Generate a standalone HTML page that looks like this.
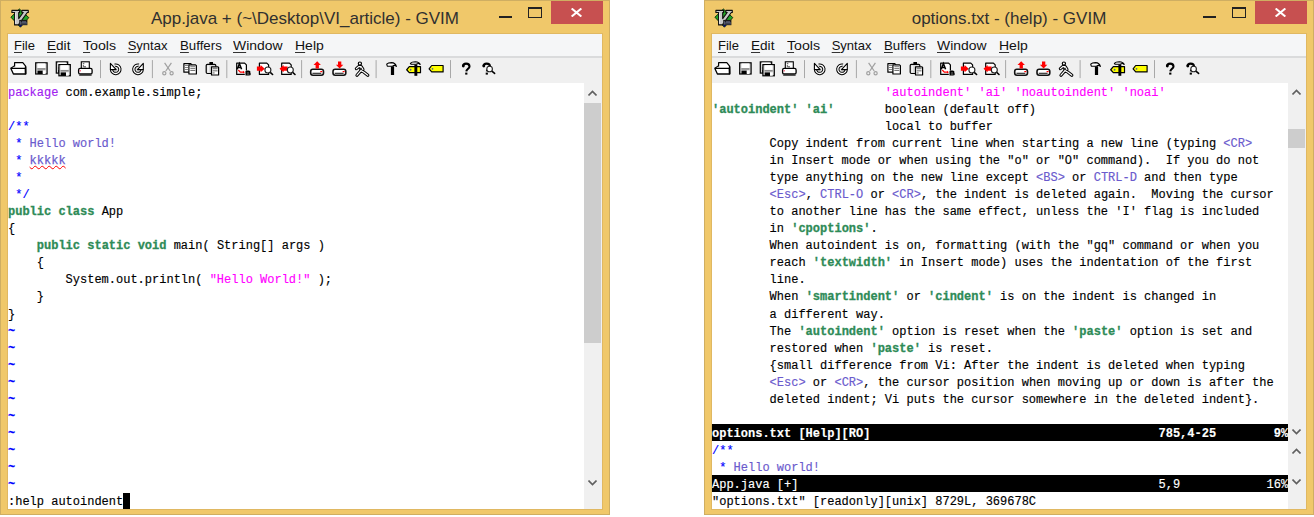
<!DOCTYPE html>
<html><head><meta charset="utf-8"><title>GVIM</title><style>
*{margin:0;padding:0;box-sizing:border-box}
body{width:1314px;height:517px;background:#fff;position:relative;overflow:hidden;font-family:"Liberation Sans",sans-serif}
.win{position:absolute;top:0;width:610px;height:515px;background:#F0C86A;border:1px solid #CFAE62}
.title{position:absolute;left:0;top:1px;width:608px;height:33px;text-align:center;font-size:17px;line-height:33px;color:#303030;white-space:pre}
.vicon{position:absolute;left:9px;top:7px}
.tmin{position:absolute;left:497.6px;top:15px;width:13px;height:2px;background:#222}
.tmax{position:absolute;left:527.2px;top:6px;width:14px;height:11px;border:1px solid #222;border-top-width:2.5px}
.tclose{position:absolute;left:550px;top:0px;width:52px;height:23px;background:#C75050}
.tclose svg{position:absolute;left:19.6px;top:6.6px}
.client{position:absolute;left:7px;top:33px;width:594px;height:475px;background:#fff;overflow:hidden;box-shadow:0 0 0 1px #E0B862}
.menu{position:absolute;left:0;top:0;width:594px;height:22px;background:#F5F6F7;font-size:13px;color:#111}
.mi{position:absolute;top:4px;white-space:pre;transform-origin:0 0}
.mi u{text-decoration:underline;text-underline-offset:1.5px;text-decoration-color:#333}
.msep{position:absolute;left:0;top:22px;width:594px;height:2px;background:#DADBDC}
.tb{position:absolute;left:0;top:24px;width:594px;height:25px;background:#F0F0F0}
.ed{position:absolute;left:0;top:0;width:576px;height:475px}
.r{position:absolute;left:0;height:17px;width:576px;font-family:"Liberation Mono",monospace;font-size:12px;line-height:20.8px;white-space:pre;color:#000;-webkit-text-stroke:0.15px currentColor}
.cm{color:#0000FF}
.sp{color:#6A5ACD}
.ty{color:#2E8B57;font-weight:bold;-webkit-text-stroke:0.3px #2E8B57}
.pp{color:#A020F0}
.co{color:#FF00FF}
.nt{color:#0000FF;font-weight:bold}
.st{background:#000;color:#fff;font-weight:bold}
.snc{background:#000;color:#fff}
.bad{text-decoration:underline wavy red;text-decoration-thickness:1px;text-underline-offset:0.5px;-webkit-text-stroke:0.25px #6A5ACD}
.cur{position:absolute;background:#000}
.sb{position:absolute;left:576px;width:18px;background:#F0F0F0}
.thumb{position:absolute;left:0;width:17px;background:#CDCDCD}
.arr{position:absolute;left:4px}
</style></head>
<body><div class="win" style="left:0px"><div class="title">App.java + (~\Desktop\VI_article) - GVIM</div><svg class="vicon" width="20" height="20" viewBox="9 7 20 20">
<polygon points="18.4,8.0 27.8,16.6 19.4,26.2 9.9,16.2" fill="#23a326" stroke="#082808" stroke-width="0.9"/>
<path d="M17.4 23.4 L19.4 26.2 L22 23.4 Z" fill="#0c0c70"/>
<path d="M10.9 9.4 H18.6 V11.5 H17.7 V17.6 L22.2 11.5 H20.9 V9.4 H27.3 V11.5 H26.3 L17.4 23.9 H13.6 V11.5 H10.9 Z" fill="#c9c9c9" stroke="#0e0e0e" stroke-width="1.1" stroke-linejoin="round"/>
<path d="M14.6 11.8 V22.8" stroke="#eee" stroke-width="0.9"/>
<rect x="18.2" y="18.9" width="8.2" height="5.3" fill="#1a1a1a"/>
<path d="M19.3 20.2 V23.6 M21.0 20.9 V23.6 M21.0 20.9 H25.0 V23.6 M23.0 20.9 V23.6" stroke="#8a90b8" stroke-width="0.7" fill="none"/>
</svg><div class="tmin"></div><div class="tmax"></div><div class="tclose"><svg width="11" height="9" viewBox="0 0 11 9"><path d="M0.6 0.5L10.4 8.5M10.4 0.5L0.6 8.5" stroke="#fff" stroke-width="2.1"/></svg></div><div class="client"><div class="menu"><span class="mi" style="left:6.0px;transform:scaleX(1.0)"><u>F</u>ile</span><span class="mi" style="left:38.9px;transform:scaleX(1.045)"><u>E</u>dit</span><span class="mi" style="left:75.4px;transform:scaleX(1.09)"><u>T</u>ools</span><span class="mi" style="left:119.7px;transform:scaleX(1.0)"><u>S</u>yntax</span><span class="mi" style="left:171.6px;transform:scaleX(1.02)"><u>B</u>uffers</span><span class="mi" style="left:224.7px;transform:scaleX(1.07)"><u>W</u>indow</span><span class="mi" style="left:287.3px;transform:scaleX(1.077)"><u>H</u>elp</span></div><div class="msep"></div><div class="tb"><svg width="594" height="25" viewBox="8 58 594 25" style="position:absolute;left:0;top:0"><rect x="100.0" y="60.1" width="1" height="18" fill="#a8a8a8"/><rect x="151.9" y="60.1" width="1" height="18" fill="#a8a8a8"/><rect x="226.3" y="60.1" width="1" height="18" fill="#a8a8a8"/><rect x="301.1" y="60.1" width="1" height="18" fill="#a8a8a8"/><rect x="375.6" y="60.1" width="1" height="18" fill="#a8a8a8"/><rect x="450.0" y="60.1" width="1" height="18" fill="#a8a8a8"/><path d="M14.6 66.5 V62.7 H22.8 L25.6 66.2 V73.8" fill="#fff" stroke="#000" stroke-width="1.2" stroke-linejoin="round"/><path d="M10.9 68.3 L14.6 65.6" stroke="#000" stroke-width="1.1"/><path d="M10.9 68.4 H25.4 L25.6 74 H13.4 Z" fill="#fff" stroke="#000" stroke-width="1.3" stroke-linejoin="round"/><line x1="25.6" y1="66.5" x2="25.6" y2="74.3" stroke="#000" stroke-width="1.6"/><rect x="35.7" y="62.800000000000004" width="11.4" height="11.200000000000001" fill="#d8d8d8" stroke="#000" stroke-width="1.2"/><rect x="37.5" y="63.400000000000006" width="7.8" height="4.712000000000001" fill="#fff"/><rect x="37.300000000000004" y="68.152" width="8.2" height="1.6" fill="#8a8a8a"/><rect x="37.5" y="70.632" width="5.292" height="3.3480000000000003" fill="#000"/><rect x="42.792" y="70.632" width="2.772" height="3.3480000000000003" fill="#fff"/><rect x="56.300000000000004" y="61.9" width="11.4" height="11.200000000000001" fill="#d8d8d8" stroke="#000" stroke-width="1.2"/><rect x="58.1" y="62.5" width="7.8" height="4.712000000000001" fill="#fff"/><rect x="57.900000000000006" y="67.252" width="8.2" height="1.6" fill="#8a8a8a"/><rect x="58.1" y="69.732" width="5.292" height="3.3480000000000003" fill="#000"/><rect x="63.392" y="69.732" width="2.772" height="3.3480000000000003" fill="#fff"/><rect x="58.9" y="64.6" width="11.4" height="11.200000000000001" fill="#d8d8d8" stroke="#000" stroke-width="1.2"/><rect x="60.699999999999996" y="65.2" width="7.8" height="4.712000000000001" fill="#fff"/><rect x="60.5" y="69.952" width="8.2" height="1.6" fill="#8a8a8a"/><rect x="60.699999999999996" y="72.432" width="5.292" height="3.3480000000000003" fill="#000"/><rect x="65.99199999999999" y="72.432" width="2.772" height="3.3480000000000003" fill="#fff"/><rect x="81.3" y="61.8" width="8" height="7" fill="#fff" stroke="#000" stroke-width="1.1"/><rect x="82.8" y="63.3" width="1.5" height="0.9" fill="#333"/><rect x="82.8" y="65.2" width="1" height="1.5" fill="#333"/><rect x="83.5" y="66.4" width="2.5" height="0.9" fill="#333"/><rect x="78.6" y="68.4" width="13.5" height="5.6" rx="1.6" fill="#fff" stroke="#000" stroke-width="1.3"/><rect x="79.5" y="70.2" width="1.4" height="1.2" fill="#f04060"/><line x1="79.2" y1="75.2" x2="91.6" y2="75.2" stroke="#222" stroke-width="1.1"/><circle cx="115.7" cy="69.3" r="2.4" fill="#e0e0e0"/><path d="M111.5 69.3 A4.2 4.2 0 1 0 114.8 65.19999999999999" fill="none" stroke="#000" stroke-width="3.3"/><path d="M111.5 69.3 A4.2 4.2 0 1 0 114.8 65.19999999999999" fill="none" stroke="#fff" stroke-width="1.3"/><path d="M110.4 63.4 V69.6 H116.2 Z" fill="#fff" stroke="#000" stroke-width="1.1" stroke-linejoin="round"/><circle cx="138.0" cy="69.3" r="2.4" fill="#e0e0e0"/><path d="M142.2 69.3 A4.2 4.2 0 1 1 138.9 65.19999999999999" fill="none" stroke="#000" stroke-width="3.3"/><path d="M142.2 69.3 A4.2 4.2 0 1 1 138.9 65.19999999999999" fill="none" stroke="#fff" stroke-width="1.3"/><path d="M143.3 63.4 V69.6 H137.5 Z" fill="#fff" stroke="#000" stroke-width="1.1" stroke-linejoin="round"/><g stroke="#a0a0a0" stroke-width="1.2" fill="none"><path d="M164.6 62.8 L170.2 71"/><path d="M171.4 62.8 L165.8 71"/><circle cx="164.3" cy="73.2" r="1.6"/><circle cx="171.6" cy="73.2" r="1.6"/></g><path d="M183.9 63.7 H190.8 L191.70000000000002 64.6 V72.2 H183.9 Z" fill="#fff" stroke="#000" stroke-width="1.2" stroke-linejoin="round"/><g fill="#777"><rect x="184.8" y="65" width="3.2" height="0.9"/><rect x="184.8" y="67" width="3.2" height="0.9"/><rect x="184.8" y="69" width="3.2" height="0.9"/></g><path d="M188.9 64.8 H195.5 L196.4 65.7 V74.0 H188.9 Z" fill="#fff" stroke="#000" stroke-width="1.2" stroke-linejoin="round"/><g fill="#666"><rect x="190.3" y="66.3" width="5" height="0.9"/><rect x="190.3" y="68.2" width="5" height="0.9"/><rect x="190.3" y="70.1" width="5" height="0.9"/></g><rect x="206.2" y="64.3" width="9.6" height="9.2" rx="1.2" fill="#ddd" stroke="#000" stroke-width="1.2"/><rect x="209.4" y="62.0" width="3.6" height="2.6" fill="#000"/><rect x="207.6" y="65.5" width="1.0" height="7" fill="#fff"/><path d="M211.5 66.8 H218.0 L218.6 67.4 V75.0 H211.5 Z" fill="#fff" stroke="#000" stroke-width="1.2" stroke-linejoin="round"/><g fill="#555"><rect x="212.6" y="68.3" width="5" height="0.9"/><rect x="212.6" y="70.4" width="5" height="0.9"/><rect x="212.6" y="72.5" width="2" height="0.9"/></g><path d="M236.7 63.1 H244.6 L246.4 64.9 V74.4 H236.7 Z" fill="#fff" stroke="#000" stroke-width="1.2" stroke-linejoin="round"/><path d="M237.2 69.2 L239.4 63.6 L241.6 69.2 M238.1 67.5 H240.7" fill="none" stroke="#000" stroke-width="1.5"/><path d="M238.3 70 L240.3 72.2 H243.6" stroke="#f00" stroke-width="1.2" fill="none"/><path d="M243 70.8 L245 72.2 L243 73.6Z" fill="#f00"/><rect x="244.8" y="70.5" width="5.6" height="5" fill="#f0f0f0"/><path d="M246.2 71.2 H248.6 C250.2 71.2 250.2 73.0 248.6 73.0 H246.2 M246.2 73.0 H248.8 C250.6 73.0 250.6 74.9 248.8 74.9 H246.2 Z M246.2 71 V75" fill="none" stroke="#000" stroke-width="1.4"/><path d="M259.40000000000003 63.1 H266.8 L268.59999999999997 64.9 V74.4 H259.40000000000003 Z" fill="#fff" stroke="#000" stroke-width="1.2" stroke-linejoin="round"/><path d="M256.9 66.6 H260.6 V65.1 L264.8 68.7 L260.6 72.3 V70.8 H256.9 Z" fill="#f00"/><line x1="269.7" y1="71.8" x2="272.6" y2="74.5" stroke="#000" stroke-width="1.6" stroke-linecap="round"/><circle cx="267.9" cy="70.0" r="3.0" fill="#fff" stroke="#222" stroke-width="1.1"/><path d="M281.70000000000005 63.1 H289.40000000000003 L291.2 64.9 V74.4 H281.70000000000005 Z" fill="#fff" stroke="#000" stroke-width="1.2" stroke-linejoin="round"/><path d="M287.6 66.6 H283.6 V65.1 L279.5 68.7 L283.6 72.3 V70.8 H287.6 Z" fill="#f00"/><line x1="292.1" y1="71.8" x2="295.0" y2="74.5" stroke="#000" stroke-width="1.6" stroke-linecap="round"/><circle cx="290.3" cy="70.0" r="3.0" fill="#fff" stroke="#222" stroke-width="1.1"/><rect x="310.7" y="69.2" width="12.800000000000034" height="6.099999999999989" rx="2.2" fill="#fff" stroke="#111" stroke-width="1.6"/><line x1="312.4" y1="73.3" x2="321.3" y2="73.3" stroke="#222" stroke-width="1.1"/><rect x="320.3" y="71.0" width="2" height="1.2" fill="#f00"/><path d="M317.2 61.2 L320.9 64.9 H318.9 V68.6 H315.6 V64.9 H313.5 Z" fill="#f00"/><rect x="333.0" y="69.2" width="12.800000000000034" height="6.099999999999989" rx="2.2" fill="#fff" stroke="#111" stroke-width="1.6"/><line x1="334.7" y1="73.3" x2="343.6" y2="73.3" stroke="#222" stroke-width="1.1"/><rect x="342.6" y="71.0" width="2" height="1.2" fill="#f00"/><path d="M339.6 68.4 L343.3 64.7 H341.3 V61.4 H338 V64.7 H335.9 Z" fill="#f00"/><path d="M356.4 68.6 L358.6 66.7 H361.2 L362.9 69.4 M360.6 66.8 L361.0 70.6 L357.0 75.2 M361.0 70.6 L364.0 72.2 L367.8 75.2" fill="none" stroke="#000" stroke-width="3.2" stroke-linejoin="round" stroke-linecap="round"/><path d="M356.4 68.6 L358.6 66.7 H361.2 L362.9 69.4 M360.6 66.8 L361.0 70.6 L357.0 75.2 M361.0 70.6 L364.0 72.2 L367.8 75.2" fill="none" stroke="#fff" stroke-width="1.2" stroke-linejoin="round" stroke-linecap="round"/><circle cx="359.9" cy="63.6" r="1.6" fill="#fff" stroke="#000" stroke-width="1.2"/><rect x="360.2" y="67.8" width="1.4" height="2.2" fill="#000"/><rect x="390.9" y="66.3" width="3.2000000000000455" height="8.700000000000003" fill="#000"/><path d="M386.70000000000005 64.2 Q388.1 62.6 391.55 62.6 Q395.5 62.8 396.4 66.39999999999999 Q394.5 64.6 392.55 66.2 H387.3 Z" fill="#fff" stroke="#000" stroke-width="1.1" stroke-linejoin="round"/><path d="M406.70000000000005 69.75 L409.3 66.6 H420.5 V72.7 H409.3 Z" fill="#ffff00" stroke="#000" stroke-width="1.2" stroke-linejoin="round"/><circle cx="410.6" cy="69.75" r="0.9" fill="#5060a0"/><rect x="414.4" y="64.4" width="2.900000000000034" height="11.399999999999991" fill="#000"/><path d="M410.40000000000003 63.400000000000006 Q411.8 61.800000000000004 415.3 61.800000000000004 Q419.3 62.0 420.2 64.5 Q418.3 62.7 416.3 64.30000000000001 H411.0 Z" fill="#fff" stroke="#000" stroke-width="1.1" stroke-linejoin="round"/><path d="M429.1 68.80000000000001 L431.7 65.5 H443.09999999999997 V71.9 H431.7 Z" fill="#ffff00" stroke="#000" stroke-width="1.2" stroke-linejoin="round"/><circle cx="432.5" cy="68.80000000000001" r="0.9" fill="#5060a0"/><path d="M463.09999999999997 66.19999999999999 C463.09999999999997 63.99999999999999 464.7 63.599999999999994 466.09999999999997 63.599999999999994 C468.3 63.599999999999994 469.5 64.8 469.5 66.39999999999999 C469.5 68.6 466.5 68.8 466.3 71.39999999999999" fill="none" stroke="#000" stroke-width="2.1"/><circle cx="463.3" cy="66.0" r="1.4" fill="#000"/><rect x="465.2" y="72.6" width="2.2" height="2.0" fill="#000"/><path d="M483.59999999999997 66.19999999999999 C483.59999999999997 63.99999999999999 485.2 63.599999999999994 486.59999999999997 63.599999999999994 C488.8 63.599999999999994 490.0 64.8 490.0 66.39999999999999 C490.0 68.6 487.0 68.8 486.8 71.39999999999999" fill="none" stroke="#000" stroke-width="2.1"/><circle cx="483.8" cy="66.0" r="1.4" fill="#000"/><rect x="485.7" y="72.6" width="2.2" height="2.0" fill="#000"/><line x1="491.28000000000003" y1="70.68" x2="494.6" y2="73.4" stroke="#000" stroke-width="1.6" stroke-linecap="round"/><circle cx="489.6" cy="69.0" r="2.8" fill="#fff" stroke="#222" stroke-width="1.1"/></svg></div><div class="ed"><div class="r " style="top:49.00px"><span class="pp">package</span> com.example.simple;</div><div class="r " style="top:66.04px"></div><div class="r " style="top:83.08px"><span class="cm">/**</span></div><div class="r " style="top:100.12px"><span class="cm"> *</span><span class="sp"> Hello world!</span></div><div class="r " style="top:117.16px"><span class="cm"> *</span> <span class="sp bad">kkkkk</span></div><div class="r " style="top:134.20px"><span class="cm"> *</span></div><div class="r " style="top:151.24px"><span class="cm"> */</span></div><div class="r " style="top:168.28px"><span class="ty">public</span> <span class="ty">class</span> App</div><div class="r " style="top:185.32px">{</div><div class="r " style="top:202.36px">    <span class="ty">public</span> <span class="ty">static</span> <span class="ty">void</span> main( String[] args )</div><div class="r " style="top:219.40px">    {</div><div class="r " style="top:236.44px">        System.out.println( <span class="co">"Hello World!"</span> );</div><div class="r " style="top:253.48px">    }</div><div class="r " style="top:270.52px">}</div><div class="r " style="top:287.56px"><span class="nt">~</span></div><div class="r " style="top:304.60px"><span class="nt">~</span></div><div class="r " style="top:321.64px"><span class="nt">~</span></div><div class="r " style="top:338.68px"><span class="nt">~</span></div><div class="r " style="top:355.72px"><span class="nt">~</span></div><div class="r " style="top:372.76px"><span class="nt">~</span></div><div class="r " style="top:389.80px"><span class="nt">~</span></div><div class="r " style="top:406.84px"><span class="nt">~</span></div><div class="r " style="top:423.88px"><span class="nt">~</span></div><div class="r " style="top:440.92px"><span class="nt">~</span></div><div class="r " style="top:457.96px">:help autoindent</div><div class="cur" style="left:114.9px;top:458.5px;width:7.2px;height:16.5px"></div></div><div class="sb" style="top:49px;height:426px"><svg class="arr" style="top:7.4px" width="9" height="6" viewBox="0 0 9 6"><path d="M0.5 5.5L4.5 1.5L8.5 5.5" fill="none" stroke="#606060" stroke-width="1.6"/></svg><div class="thumb" style="top:19.7px;height:240.3px"></div><svg class="arr" style="top:396.8px" width="9" height="6" viewBox="0 0 9 6"><path d="M0.5 0.5L4.5 4.5L8.5 0.5" fill="none" stroke="#606060" stroke-width="1.6"/></svg></div></div></div><div class="win" style="left:704px"><div class="title">options.txt - (help) - GVIM</div><svg class="vicon" width="20" height="20" viewBox="9 7 20 20">
<polygon points="18.4,8.0 27.8,16.6 19.4,26.2 9.9,16.2" fill="#23a326" stroke="#082808" stroke-width="0.9"/>
<path d="M17.4 23.4 L19.4 26.2 L22 23.4 Z" fill="#0c0c70"/>
<path d="M10.9 9.4 H18.6 V11.5 H17.7 V17.6 L22.2 11.5 H20.9 V9.4 H27.3 V11.5 H26.3 L17.4 23.9 H13.6 V11.5 H10.9 Z" fill="#c9c9c9" stroke="#0e0e0e" stroke-width="1.1" stroke-linejoin="round"/>
<path d="M14.6 11.8 V22.8" stroke="#eee" stroke-width="0.9"/>
<rect x="18.2" y="18.9" width="8.2" height="5.3" fill="#1a1a1a"/>
<path d="M19.3 20.2 V23.6 M21.0 20.9 V23.6 M21.0 20.9 H25.0 V23.6 M23.0 20.9 V23.6" stroke="#8a90b8" stroke-width="0.7" fill="none"/>
</svg><div class="tmin"></div><div class="tmax"></div><div class="tclose"><svg width="11" height="9" viewBox="0 0 11 9"><path d="M0.6 0.5L10.4 8.5M10.4 0.5L0.6 8.5" stroke="#fff" stroke-width="2.1"/></svg></div><div class="client"><div class="menu"><span class="mi" style="left:6.0px;transform:scaleX(1.0)"><u>F</u>ile</span><span class="mi" style="left:38.9px;transform:scaleX(1.045)"><u>E</u>dit</span><span class="mi" style="left:75.4px;transform:scaleX(1.09)"><u>T</u>ools</span><span class="mi" style="left:119.7px;transform:scaleX(1.0)"><u>S</u>yntax</span><span class="mi" style="left:171.6px;transform:scaleX(1.02)"><u>B</u>uffers</span><span class="mi" style="left:224.7px;transform:scaleX(1.07)"><u>W</u>indow</span><span class="mi" style="left:287.3px;transform:scaleX(1.077)"><u>H</u>elp</span></div><div class="msep"></div><div class="tb"><svg width="594" height="25" viewBox="8 58 594 25" style="position:absolute;left:0;top:0"><rect x="100.0" y="60.1" width="1" height="18" fill="#a8a8a8"/><rect x="151.9" y="60.1" width="1" height="18" fill="#a8a8a8"/><rect x="226.3" y="60.1" width="1" height="18" fill="#a8a8a8"/><rect x="301.1" y="60.1" width="1" height="18" fill="#a8a8a8"/><rect x="375.6" y="60.1" width="1" height="18" fill="#a8a8a8"/><rect x="450.0" y="60.1" width="1" height="18" fill="#a8a8a8"/><path d="M14.6 66.5 V62.7 H22.8 L25.6 66.2 V73.8" fill="#fff" stroke="#000" stroke-width="1.2" stroke-linejoin="round"/><path d="M10.9 68.3 L14.6 65.6" stroke="#000" stroke-width="1.1"/><path d="M10.9 68.4 H25.4 L25.6 74 H13.4 Z" fill="#fff" stroke="#000" stroke-width="1.3" stroke-linejoin="round"/><line x1="25.6" y1="66.5" x2="25.6" y2="74.3" stroke="#000" stroke-width="1.6"/><rect x="35.7" y="62.800000000000004" width="11.4" height="11.200000000000001" fill="#d8d8d8" stroke="#000" stroke-width="1.2"/><rect x="37.5" y="63.400000000000006" width="7.8" height="4.712000000000001" fill="#fff"/><rect x="37.300000000000004" y="68.152" width="8.2" height="1.6" fill="#8a8a8a"/><rect x="37.5" y="70.632" width="5.292" height="3.3480000000000003" fill="#000"/><rect x="42.792" y="70.632" width="2.772" height="3.3480000000000003" fill="#fff"/><rect x="56.300000000000004" y="61.9" width="11.4" height="11.200000000000001" fill="#d8d8d8" stroke="#000" stroke-width="1.2"/><rect x="58.1" y="62.5" width="7.8" height="4.712000000000001" fill="#fff"/><rect x="57.900000000000006" y="67.252" width="8.2" height="1.6" fill="#8a8a8a"/><rect x="58.1" y="69.732" width="5.292" height="3.3480000000000003" fill="#000"/><rect x="63.392" y="69.732" width="2.772" height="3.3480000000000003" fill="#fff"/><rect x="58.9" y="64.6" width="11.4" height="11.200000000000001" fill="#d8d8d8" stroke="#000" stroke-width="1.2"/><rect x="60.699999999999996" y="65.2" width="7.8" height="4.712000000000001" fill="#fff"/><rect x="60.5" y="69.952" width="8.2" height="1.6" fill="#8a8a8a"/><rect x="60.699999999999996" y="72.432" width="5.292" height="3.3480000000000003" fill="#000"/><rect x="65.99199999999999" y="72.432" width="2.772" height="3.3480000000000003" fill="#fff"/><rect x="81.3" y="61.8" width="8" height="7" fill="#fff" stroke="#000" stroke-width="1.1"/><rect x="82.8" y="63.3" width="1.5" height="0.9" fill="#333"/><rect x="82.8" y="65.2" width="1" height="1.5" fill="#333"/><rect x="83.5" y="66.4" width="2.5" height="0.9" fill="#333"/><rect x="78.6" y="68.4" width="13.5" height="5.6" rx="1.6" fill="#fff" stroke="#000" stroke-width="1.3"/><rect x="79.5" y="70.2" width="1.4" height="1.2" fill="#f04060"/><line x1="79.2" y1="75.2" x2="91.6" y2="75.2" stroke="#222" stroke-width="1.1"/><circle cx="115.7" cy="69.3" r="2.4" fill="#e0e0e0"/><path d="M111.5 69.3 A4.2 4.2 0 1 0 114.8 65.19999999999999" fill="none" stroke="#000" stroke-width="3.3"/><path d="M111.5 69.3 A4.2 4.2 0 1 0 114.8 65.19999999999999" fill="none" stroke="#fff" stroke-width="1.3"/><path d="M110.4 63.4 V69.6 H116.2 Z" fill="#fff" stroke="#000" stroke-width="1.1" stroke-linejoin="round"/><circle cx="138.0" cy="69.3" r="2.4" fill="#e0e0e0"/><path d="M142.2 69.3 A4.2 4.2 0 1 1 138.9 65.19999999999999" fill="none" stroke="#000" stroke-width="3.3"/><path d="M142.2 69.3 A4.2 4.2 0 1 1 138.9 65.19999999999999" fill="none" stroke="#fff" stroke-width="1.3"/><path d="M143.3 63.4 V69.6 H137.5 Z" fill="#fff" stroke="#000" stroke-width="1.1" stroke-linejoin="round"/><g stroke="#a0a0a0" stroke-width="1.2" fill="none"><path d="M164.6 62.8 L170.2 71"/><path d="M171.4 62.8 L165.8 71"/><circle cx="164.3" cy="73.2" r="1.6"/><circle cx="171.6" cy="73.2" r="1.6"/></g><path d="M183.9 63.7 H190.8 L191.70000000000002 64.6 V72.2 H183.9 Z" fill="#fff" stroke="#000" stroke-width="1.2" stroke-linejoin="round"/><g fill="#777"><rect x="184.8" y="65" width="3.2" height="0.9"/><rect x="184.8" y="67" width="3.2" height="0.9"/><rect x="184.8" y="69" width="3.2" height="0.9"/></g><path d="M188.9 64.8 H195.5 L196.4 65.7 V74.0 H188.9 Z" fill="#fff" stroke="#000" stroke-width="1.2" stroke-linejoin="round"/><g fill="#666"><rect x="190.3" y="66.3" width="5" height="0.9"/><rect x="190.3" y="68.2" width="5" height="0.9"/><rect x="190.3" y="70.1" width="5" height="0.9"/></g><rect x="206.2" y="64.3" width="9.6" height="9.2" rx="1.2" fill="#ddd" stroke="#000" stroke-width="1.2"/><rect x="209.4" y="62.0" width="3.6" height="2.6" fill="#000"/><rect x="207.6" y="65.5" width="1.0" height="7" fill="#fff"/><path d="M211.5 66.8 H218.0 L218.6 67.4 V75.0 H211.5 Z" fill="#fff" stroke="#000" stroke-width="1.2" stroke-linejoin="round"/><g fill="#555"><rect x="212.6" y="68.3" width="5" height="0.9"/><rect x="212.6" y="70.4" width="5" height="0.9"/><rect x="212.6" y="72.5" width="2" height="0.9"/></g><path d="M236.7 63.1 H244.6 L246.4 64.9 V74.4 H236.7 Z" fill="#fff" stroke="#000" stroke-width="1.2" stroke-linejoin="round"/><path d="M237.2 69.2 L239.4 63.6 L241.6 69.2 M238.1 67.5 H240.7" fill="none" stroke="#000" stroke-width="1.5"/><path d="M238.3 70 L240.3 72.2 H243.6" stroke="#f00" stroke-width="1.2" fill="none"/><path d="M243 70.8 L245 72.2 L243 73.6Z" fill="#f00"/><rect x="244.8" y="70.5" width="5.6" height="5" fill="#f0f0f0"/><path d="M246.2 71.2 H248.6 C250.2 71.2 250.2 73.0 248.6 73.0 H246.2 M246.2 73.0 H248.8 C250.6 73.0 250.6 74.9 248.8 74.9 H246.2 Z M246.2 71 V75" fill="none" stroke="#000" stroke-width="1.4"/><path d="M259.40000000000003 63.1 H266.8 L268.59999999999997 64.9 V74.4 H259.40000000000003 Z" fill="#fff" stroke="#000" stroke-width="1.2" stroke-linejoin="round"/><path d="M256.9 66.6 H260.6 V65.1 L264.8 68.7 L260.6 72.3 V70.8 H256.9 Z" fill="#f00"/><line x1="269.7" y1="71.8" x2="272.6" y2="74.5" stroke="#000" stroke-width="1.6" stroke-linecap="round"/><circle cx="267.9" cy="70.0" r="3.0" fill="#fff" stroke="#222" stroke-width="1.1"/><path d="M281.70000000000005 63.1 H289.40000000000003 L291.2 64.9 V74.4 H281.70000000000005 Z" fill="#fff" stroke="#000" stroke-width="1.2" stroke-linejoin="round"/><path d="M287.6 66.6 H283.6 V65.1 L279.5 68.7 L283.6 72.3 V70.8 H287.6 Z" fill="#f00"/><line x1="292.1" y1="71.8" x2="295.0" y2="74.5" stroke="#000" stroke-width="1.6" stroke-linecap="round"/><circle cx="290.3" cy="70.0" r="3.0" fill="#fff" stroke="#222" stroke-width="1.1"/><rect x="310.7" y="69.2" width="12.800000000000034" height="6.099999999999989" rx="2.2" fill="#fff" stroke="#111" stroke-width="1.6"/><line x1="312.4" y1="73.3" x2="321.3" y2="73.3" stroke="#222" stroke-width="1.1"/><rect x="320.3" y="71.0" width="2" height="1.2" fill="#f00"/><path d="M317.2 61.2 L320.9 64.9 H318.9 V68.6 H315.6 V64.9 H313.5 Z" fill="#f00"/><rect x="333.0" y="69.2" width="12.800000000000034" height="6.099999999999989" rx="2.2" fill="#fff" stroke="#111" stroke-width="1.6"/><line x1="334.7" y1="73.3" x2="343.6" y2="73.3" stroke="#222" stroke-width="1.1"/><rect x="342.6" y="71.0" width="2" height="1.2" fill="#f00"/><path d="M339.6 68.4 L343.3 64.7 H341.3 V61.4 H338 V64.7 H335.9 Z" fill="#f00"/><path d="M356.4 68.6 L358.6 66.7 H361.2 L362.9 69.4 M360.6 66.8 L361.0 70.6 L357.0 75.2 M361.0 70.6 L364.0 72.2 L367.8 75.2" fill="none" stroke="#000" stroke-width="3.2" stroke-linejoin="round" stroke-linecap="round"/><path d="M356.4 68.6 L358.6 66.7 H361.2 L362.9 69.4 M360.6 66.8 L361.0 70.6 L357.0 75.2 M361.0 70.6 L364.0 72.2 L367.8 75.2" fill="none" stroke="#fff" stroke-width="1.2" stroke-linejoin="round" stroke-linecap="round"/><circle cx="359.9" cy="63.6" r="1.6" fill="#fff" stroke="#000" stroke-width="1.2"/><rect x="360.2" y="67.8" width="1.4" height="2.2" fill="#000"/><rect x="390.9" y="66.3" width="3.2000000000000455" height="8.700000000000003" fill="#000"/><path d="M386.70000000000005 64.2 Q388.1 62.6 391.55 62.6 Q395.5 62.8 396.4 66.39999999999999 Q394.5 64.6 392.55 66.2 H387.3 Z" fill="#fff" stroke="#000" stroke-width="1.1" stroke-linejoin="round"/><path d="M406.70000000000005 69.75 L409.3 66.6 H420.5 V72.7 H409.3 Z" fill="#ffff00" stroke="#000" stroke-width="1.2" stroke-linejoin="round"/><circle cx="410.6" cy="69.75" r="0.9" fill="#5060a0"/><rect x="414.4" y="64.4" width="2.900000000000034" height="11.399999999999991" fill="#000"/><path d="M410.40000000000003 63.400000000000006 Q411.8 61.800000000000004 415.3 61.800000000000004 Q419.3 62.0 420.2 64.5 Q418.3 62.7 416.3 64.30000000000001 H411.0 Z" fill="#fff" stroke="#000" stroke-width="1.1" stroke-linejoin="round"/><path d="M429.1 68.80000000000001 L431.7 65.5 H443.09999999999997 V71.9 H431.7 Z" fill="#ffff00" stroke="#000" stroke-width="1.2" stroke-linejoin="round"/><circle cx="432.5" cy="68.80000000000001" r="0.9" fill="#5060a0"/><path d="M463.09999999999997 66.19999999999999 C463.09999999999997 63.99999999999999 464.7 63.599999999999994 466.09999999999997 63.599999999999994 C468.3 63.599999999999994 469.5 64.8 469.5 66.39999999999999 C469.5 68.6 466.5 68.8 466.3 71.39999999999999" fill="none" stroke="#000" stroke-width="2.1"/><circle cx="463.3" cy="66.0" r="1.4" fill="#000"/><rect x="465.2" y="72.6" width="2.2" height="2.0" fill="#000"/><path d="M483.59999999999997 66.19999999999999 C483.59999999999997 63.99999999999999 485.2 63.599999999999994 486.59999999999997 63.599999999999994 C488.8 63.599999999999994 490.0 64.8 490.0 66.39999999999999 C490.0 68.6 487.0 68.8 486.8 71.39999999999999" fill="none" stroke="#000" stroke-width="2.1"/><circle cx="483.8" cy="66.0" r="1.4" fill="#000"/><rect x="485.7" y="72.6" width="2.2" height="2.0" fill="#000"/><line x1="491.28000000000003" y1="70.68" x2="494.6" y2="73.4" stroke="#000" stroke-width="1.6" stroke-linecap="round"/><circle cx="489.6" cy="69.0" r="2.8" fill="#fff" stroke="#222" stroke-width="1.1"/></svg></div><div class="ed"><div class="r " style="top:49.00px">                        <span class="co">'autoindent' 'ai' 'noautoindent' 'noai'</span></div><div class="r " style="top:66.04px"><span class="ty">'autoindent' 'ai'</span>       boolean (default off)</div><div class="r " style="top:83.08px">                        local to buffer</div><div class="r " style="top:100.12px">        Copy indent from current line when starting a new line (typing <span class="sp">&lt;CR&gt;</span></div><div class="r " style="top:117.16px">        in Insert mode or when using the "o" or "O" command).  If you do not</div><div class="r " style="top:134.20px">        type anything on the new line except <span class="sp">&lt;BS&gt;</span> or <span class="sp">CTRL-D</span> and then type</div><div class="r " style="top:151.24px">        <span class="sp">&lt;Esc&gt;</span>, <span class="sp">CTRL-O</span> or <span class="sp">&lt;CR&gt;</span>, the indent is deleted again.  Moving the cursor</div><div class="r " style="top:168.28px">        to another line has the same effect, unless the 'I' flag is included</div><div class="r " style="top:185.32px">        in <span class="ty">'cpoptions'</span>.</div><div class="r " style="top:202.36px">        When autoindent is on, formatting (with the "gq" command or when you</div><div class="r " style="top:219.40px">        reach <span class="ty">'textwidth'</span> in Insert mode) uses the indentation of the first</div><div class="r " style="top:236.44px">        line.</div><div class="r " style="top:253.48px">        When <span class="ty">'smartindent'</span> or <span class="ty">'cindent'</span> is on the indent is changed in</div><div class="r " style="top:270.52px">        a different way.</div><div class="r " style="top:287.56px">        The <span class="ty">'autoindent'</span> option is reset when the <span class="ty">'paste'</span> option is set and</div><div class="r " style="top:304.60px">        restored when <span class="ty">'paste'</span> is reset.</div><div class="r " style="top:321.64px">        {small difference from Vi: After the indent is deleted when typing</div><div class="r " style="top:338.68px">        <span class="sp">&lt;Esc&gt;</span> or <span class="sp">&lt;CR&gt;</span>, the cursor position when moving up or down is after the</div><div class="r " style="top:355.72px">        deleted indent; Vi puts the cursor somewhere in the deleted indent}.</div><div class="r " style="top:372.76px"></div><div class="r st" style="top:389.80px">options.txt [Help][RO]                                        785,4-25        9%</div><div class="r " style="top:406.84px"><span class="cm">/**</span></div><div class="r " style="top:423.88px"><span class="cm"> *</span><span class="sp"> Hello world!</span></div><div class="r snc" style="top:440.92px">App.java [+]                                                  5,9            16%</div><div class="r " style="top:457.96px">"options.txt" [readonly][unix] 8729L, 369678C</div></div><div class="sb" style="top:49px;height:358px"><svg class="arr" style="top:6.0px" width="9" height="6" viewBox="0 0 9 6"><path d="M0.5 5.5L4.5 1.5L8.5 5.5" fill="none" stroke="#606060" stroke-width="1.6"/></svg><div class="thumb" style="top:46px;height:18.7px"></div><svg class="arr" style="top:345.6px" width="9" height="6" viewBox="0 0 9 6"><path d="M0.5 0.5L4.5 4.5L8.5 0.5" fill="none" stroke="#606060" stroke-width="1.6"/></svg></div><div class="sb" style="top:407px;height:68px"><svg class="arr" style="top:6.7px" width="9" height="6" viewBox="0 0 9 6"><path d="M0.5 5.5L4.5 1.5L8.5 5.5" fill="none" stroke="#606060" stroke-width="1.6"/></svg><svg class="arr" style="top:38.0px" width="9" height="6" viewBox="0 0 9 6"><path d="M0.5 0.5L4.5 4.5L8.5 0.5" fill="none" stroke="#606060" stroke-width="1.6"/></svg></div></div></div></body></html>
